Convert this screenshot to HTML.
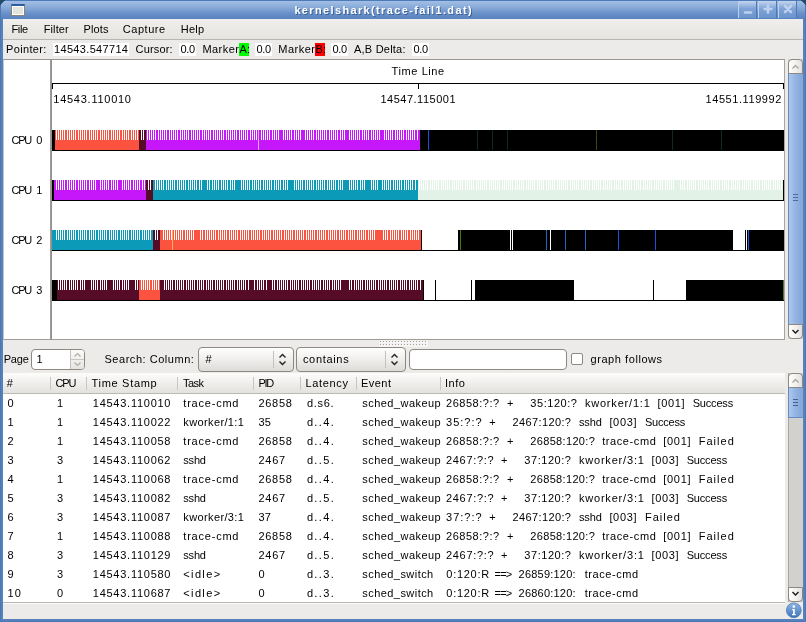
<!DOCTYPE html>
<html><head><meta charset="utf-8"><title>kernelshark</title>
<style>
html,body{margin:0;padding:0;}
body{width:806px;height:622px;position:relative;overflow:hidden;background:#edebe9;font:11px "Liberation Sans",sans-serif;color:#000;}
.a{position:absolute;}
.t{position:absolute;white-space:pre;line-height:16px;font-family:"Liberation Sans",sans-serif;}
.sb{background:linear-gradient(90deg,#ffffff,#f3f2f0 50%,#e2e0dd) !important;}
.btn{position:absolute;border:1px solid #8d8880;border-radius:3px;background:linear-gradient(#ffffff,#ecebe9 60%,#dddbd8);box-sizing:border-box;}
</style></head><body>
<!-- window frame -->
<div class="a" style="left:0;top:0;width:806px;height:622px;background:#5681bd;"></div>
<div class="a" style="left:0;top:0;width:806px;height:19px;background:linear-gradient(#4d7ab8 0,#4d7ab8 1px,#a3bfe4 1px,#86a8d8 8px,#6a92ca 13px,#5882bf 19px);"></div>
<svg class="a" style="left:0;top:0" width="806" height="6" viewBox="0 0 806 6" shape-rendering="crispEdges"><g fill="#214a66"><rect x="0" y="0" width="5" height="1"/><rect x="0" y="1" width="3" height="1"/><rect x="0" y="2" width="2" height="1"/><rect x="0" y="3" width="1" height="2"/><rect x="801" y="0" width="5" height="1"/><rect x="803" y="1" width="3" height="1"/><rect x="804" y="2" width="2" height="1"/><rect x="805" y="3" width="1" height="2"/></g><g fill="#3d6590"><rect x="3" y="1" width="1" height="1"/><rect x="2" y="2" width="1" height="1"/><rect x="1" y="3" width="1" height="1"/><rect x="802" y="1" width="1" height="1"/><rect x="803" y="2" width="1" height="1"/><rect x="804" y="3" width="1" height="1"/></g></svg>
<!-- window icon -->
<div class="a" style="left:11px;top:4px;width:14px;height:12px;background:#fff;box-sizing:border-box;border:1px solid #8b8474;border-top:2px solid #2d5ca2;"></div>
<div class="a" style="left:13px;top:7px;width:10px;height:7px;background:#e2e4de;"></div>
<!-- title buttons -->
<div class="a" style="left:738px;top:1px;width:19px;height:17px;background:linear-gradient(#c3d5ee,#7ea3d6 45%,#6b94cd);border-left:1px solid #bcd0ec;border-right:1px solid #4f78b4;box-sizing:border-box;"></div>
<div class="a" style="left:758px;top:1px;width:19px;height:17px;background:linear-gradient(#c3d5ee,#7ea3d6 45%,#6b94cd);border-left:1px solid #bcd0ec;border-right:1px solid #4f78b4;box-sizing:border-box;"></div>
<div class="a" style="left:778px;top:1px;width:19px;height:17px;background:linear-gradient(#c3d5ee,#7ea3d6 45%,#6b94cd);border-left:1px solid #bcd0ec;border-right:1px solid #4f78b4;box-sizing:border-box;"></div>
<svg class="a" style="left:738px;top:1px" width="60" height="17" viewBox="0 0 60 17">
 <g fill="none" stroke="#bdd0ed" stroke-width="2.6" stroke-linecap="round">
  <path d="M7 11.5h6"/>
  <path d="M30 4.5v7M26.5 8h7"/>
  <path d="M47 5l6 6M53 5l-6 6"/>
 </g>
</svg>
<div class="a" style="left:0;top:5px;width:1px;height:617px;background:#4c78b5;"></div>
<div class="a" style="left:805px;top:5px;width:1px;height:617px;background:#4c78b5;"></div>
<div class="a" style="left:0;top:621px;width:806px;height:1px;background:#4c78b5;"></div>
<!-- client area -->
<div class="a" style="left:3px;top:19px;width:800px;height:600px;background:#edebe9;"></div>
<!-- menubar -->
<div class="a" style="left:3px;top:19px;width:800px;height:20px;background:linear-gradient(#efeeec,#e6e4e1);"></div>
<div class="a" style="left:3px;top:39px;width:800px;height:1px;background:#b9b5af;"></div>
<!-- info bar boxes -->
<div class="a" style="left:53px;top:43px;width:76px;height:13px;background:#fff;"></div>
<div class="a" style="left:179px;top:43px;width:17px;height:13px;background:#fff;"></div>
<div class="a" style="left:239px;top:43px;width:10px;height:13px;background:#00ff00;"></div>
<div class="a" style="left:255px;top:43px;width:17px;height:13px;background:#fff;"></div>
<div class="a" style="left:315px;top:43px;width:10px;height:13px;background:#ff0000;"></div>
<div class="a" style="left:331px;top:43px;width:17px;height:13px;background:#fff;"></div>
<div class="a" style="left:412px;top:43px;width:17px;height:13px;background:#fff;"></div>
<!-- graph area -->
<div class="a" style="left:3px;top:59px;width:782px;height:281px;background:#fff;border-top:1px solid #9c968e;border-left:1px solid #c9c5c0;border-right:1px solid #a8a39d;border-bottom:1px solid #a09b95;box-sizing:border-box;"></div>
<div class="a" style="left:50px;top:60px;width:2px;height:280px;background:linear-gradient(90deg,#a5a09b,#8f8b86);"></div>
<!-- graph scrollbar -->
<div class="a" style="left:788px;top:59px;width:15px;height:280px;background:#d3d1ce;"></div>
<div class="a" style="left:788px;top:73px;width:15px;height:252px;box-sizing:border-box;border:1px solid #6389c0;border-right-color:#86a8da;background:linear-gradient(90deg,#adc8ed,#96b6e3 45%,#84a7d9);"></div>
<div class="btn sb" style="left:788px;top:59px;width:15px;height:15px;border-radius:4px 4px 0 0;"></div>
<div class="btn sb" style="left:788px;top:324px;width:15px;height:15px;border-radius:0 0 4px 4px;"></div>
<svg class="a" style="left:788px;top:59px" width="15" height="280" viewBox="0 0 15 280" fill="none">
 <path d="M4.5 9.5l3-3 3 3" stroke="#a9a6a2" stroke-width="1.4"/>
 <path d="M4.5 271l3 3 3-3" stroke="#1a1a1a" stroke-width="1.4"/>
 <path d="M5 135.5h5M5 138.5h5M5 141.5h5" stroke="#4d6c9e" stroke-width="1"/>
</svg>
<!-- pane handle -->
<svg class="a" style="left:379px;top:340px" width="49" height="7" viewBox="0 0 49 7" shape-rendering="crispEdges"><rect width="49" height="7" fill="#f3f2f0"/><rect x="1" y="1" width="1" height="1" fill="#a39f9a"/><rect x="2" y="2" width="1" height="1" fill="#fff"/><rect x="4" y="1" width="1" height="1" fill="#a39f9a"/><rect x="5" y="2" width="1" height="1" fill="#fff"/><rect x="7" y="1" width="1" height="1" fill="#a39f9a"/><rect x="8" y="2" width="1" height="1" fill="#fff"/><rect x="10" y="1" width="1" height="1" fill="#a39f9a"/><rect x="11" y="2" width="1" height="1" fill="#fff"/><rect x="13" y="1" width="1" height="1" fill="#a39f9a"/><rect x="14" y="2" width="1" height="1" fill="#fff"/><rect x="16" y="1" width="1" height="1" fill="#a39f9a"/><rect x="17" y="2" width="1" height="1" fill="#fff"/><rect x="19" y="1" width="1" height="1" fill="#a39f9a"/><rect x="20" y="2" width="1" height="1" fill="#fff"/><rect x="22" y="1" width="1" height="1" fill="#a39f9a"/><rect x="23" y="2" width="1" height="1" fill="#fff"/><rect x="25" y="1" width="1" height="1" fill="#a39f9a"/><rect x="26" y="2" width="1" height="1" fill="#fff"/><rect x="28" y="1" width="1" height="1" fill="#a39f9a"/><rect x="29" y="2" width="1" height="1" fill="#fff"/><rect x="31" y="1" width="1" height="1" fill="#a39f9a"/><rect x="32" y="2" width="1" height="1" fill="#fff"/><rect x="34" y="1" width="1" height="1" fill="#a39f9a"/><rect x="35" y="2" width="1" height="1" fill="#fff"/><rect x="37" y="1" width="1" height="1" fill="#a39f9a"/><rect x="38" y="2" width="1" height="1" fill="#fff"/><rect x="40" y="1" width="1" height="1" fill="#a39f9a"/><rect x="41" y="2" width="1" height="1" fill="#fff"/><rect x="43" y="1" width="1" height="1" fill="#a39f9a"/><rect x="44" y="2" width="1" height="1" fill="#fff"/><rect x="46" y="1" width="1" height="1" fill="#a39f9a"/><rect x="47" y="2" width="1" height="1" fill="#fff"/><rect x="1" y="4" width="1" height="1" fill="#a39f9a"/><rect x="2" y="5" width="1" height="1" fill="#fff"/><rect x="4" y="4" width="1" height="1" fill="#a39f9a"/><rect x="5" y="5" width="1" height="1" fill="#fff"/><rect x="7" y="4" width="1" height="1" fill="#a39f9a"/><rect x="8" y="5" width="1" height="1" fill="#fff"/><rect x="10" y="4" width="1" height="1" fill="#a39f9a"/><rect x="11" y="5" width="1" height="1" fill="#fff"/><rect x="13" y="4" width="1" height="1" fill="#a39f9a"/><rect x="14" y="5" width="1" height="1" fill="#fff"/><rect x="16" y="4" width="1" height="1" fill="#a39f9a"/><rect x="17" y="5" width="1" height="1" fill="#fff"/><rect x="19" y="4" width="1" height="1" fill="#a39f9a"/><rect x="20" y="5" width="1" height="1" fill="#fff"/><rect x="22" y="4" width="1" height="1" fill="#a39f9a"/><rect x="23" y="5" width="1" height="1" fill="#fff"/><rect x="25" y="4" width="1" height="1" fill="#a39f9a"/><rect x="26" y="5" width="1" height="1" fill="#fff"/><rect x="28" y="4" width="1" height="1" fill="#a39f9a"/><rect x="29" y="5" width="1" height="1" fill="#fff"/><rect x="31" y="4" width="1" height="1" fill="#a39f9a"/><rect x="32" y="5" width="1" height="1" fill="#fff"/><rect x="34" y="4" width="1" height="1" fill="#a39f9a"/><rect x="35" y="5" width="1" height="1" fill="#fff"/><rect x="37" y="4" width="1" height="1" fill="#a39f9a"/><rect x="38" y="5" width="1" height="1" fill="#fff"/><rect x="40" y="4" width="1" height="1" fill="#a39f9a"/><rect x="41" y="5" width="1" height="1" fill="#fff"/><rect x="43" y="4" width="1" height="1" fill="#a39f9a"/><rect x="44" y="5" width="1" height="1" fill="#fff"/><rect x="46" y="4" width="1" height="1" fill="#a39f9a"/><rect x="47" y="5" width="1" height="1" fill="#fff"/></svg>
<!-- search bar widgets -->
<div class="a" style="left:31px;top:349px;width:54px;height:21px;box-sizing:border-box;border:1px solid #8d8880;border-radius:4px;background:#fff;"></div>
<div class="a" style="left:70px;top:350px;width:14px;height:19px;box-sizing:border-box;border-left:1px solid #c4c0ba;background:linear-gradient(#fbfbfa,#e7e5e2);border-radius:0 3px 3px 0;"></div>
<div class="a" style="left:71px;top:359px;width:13px;height:1px;background:#c9c6c1;"></div>
<svg class="a" style="left:70px;top:350px" width="15" height="19" viewBox="0 0 15 19" fill="none" stroke="#b0ada8" stroke-width="1.2"><path d="M4.5 6.5l3-3 3 3M4.5 12.5l3 3 3-3"/></svg>
<div class="btn" style="left:198px;top:347px;width:96px;height:25px;border-radius:4px;"></div>
<div class="a" style="left:273px;top:351px;width:1px;height:17px;background:#c4c0ba;"></div>
<div class="btn" style="left:296px;top:347px;width:110px;height:25px;border-radius:4px;"></div>
<div class="a" style="left:385px;top:351px;width:1px;height:17px;background:#c4c0ba;"></div>
<svg class="a" style="left:276px;top:352px" width="130" height="15" viewBox="0 0 130 15" fill="none" stroke="#222" stroke-width="1.4"><path d="M3.5 5.5l3-3 3 3M3.5 9.5l3 3 3-3"/><path d="M115.5 5.5l3-3 3 3M115.5 9.5l3 3 3-3"/></svg>
<div class="a" style="left:409px;top:349px;width:158px;height:21px;box-sizing:border-box;border:1px solid #8d8880;border-radius:4px;background:#fff;"></div>
<div class="a" style="left:571px;top:353px;width:12px;height:12px;box-sizing:border-box;border:1px solid #8d8880;border-radius:2px;background:#fff;"></div>
<!-- list -->
<div class="a" style="left:3px;top:373px;width:782px;height:229px;background:#fff;"></div>
<div class="a" style="left:3px;top:373px;width:782px;height:21px;background:linear-gradient(#fdfdfc,#f1f0ee 45%,#e4e2df);border-bottom:1px solid #bcb8b2;box-sizing:border-box;"></div>
<div class="a" style="left:50px;top:377px;width:1px;height:13px;background:#c9c6c1;"></div>
<div class="a" style="left:86px;top:377px;width:1px;height:13px;background:#c9c6c1;"></div>
<div class="a" style="left:177px;top:377px;width:1px;height:13px;background:#c9c6c1;"></div>
<div class="a" style="left:253px;top:377px;width:1px;height:13px;background:#c9c6c1;"></div>
<div class="a" style="left:300px;top:377px;width:1px;height:13px;background:#c9c6c1;"></div>
<div class="a" style="left:356px;top:377px;width:1px;height:13px;background:#c9c6c1;"></div>
<div class="a" style="left:440px;top:377px;width:1px;height:13px;background:#c9c6c1;"></div>
<div class="a" style="left:3px;top:602px;width:782px;height:1px;background:#b9b6b1;"></div>
<div class="a" style="left:3px;top:603px;width:782px;height:1px;background:#fbfaf9;"></div>
<!-- list scrollbar -->
<div class="a" style="left:788px;top:373px;width:15px;height:229px;background:#d3d1ce;border-left:1px solid #a9a6a1;box-sizing:border-box;"></div>
<div class="a" style="left:788px;top:387px;width:15px;height:31px;box-sizing:border-box;border:1px solid #6389c0;border-right-color:#86a8da;background:linear-gradient(90deg,#adc8ed,#96b6e3 45%,#84a7d9);"></div>
<div class="btn sb" style="left:788px;top:373px;width:15px;height:15px;border-radius:4px 4px 0 0;"></div>
<div class="btn sb" style="left:788px;top:587px;width:15px;height:15px;border-radius:0 0 4px 4px;"></div>
<svg class="a" style="left:788px;top:373px" width="15" height="229" viewBox="0 0 15 229" fill="none">
 <path d="M4.5 9.5l3-3 3 3" stroke="#a9a6a2" stroke-width="1.4"/>
 <path d="M4.5 219l3 3 3-3" stroke="#1a1a1a" stroke-width="1.4"/>
 <path d="M5 26.5h5M5 29.5h5M5 32.5h5" stroke="#44608c" stroke-width="1"/>
</svg>
<!-- info icon -->
<svg class="a" style="left:785px;top:602px" width="18" height="17" viewBox="0 0 18 17">
 <defs><linearGradient id="ig" x1="0" y1="0" x2="0" y2="1"><stop offset="0" stop-color="#8fb6e6"/><stop offset="1" stop-color="#3d73b8"/></linearGradient></defs>
 <circle cx="8.8" cy="8.3" r="7.4" fill="url(#ig)" stroke="#4a79b6" stroke-width="0.8"/>
 <circle cx="8.8" cy="4.6" r="1.3" fill="#fff"/>
 <path d="M7.2 7h2.6v5h1v1.2H7V12h1.1V8.2H7.2z" fill="#fff"/>
</svg>
<svg width="806" height="622" viewBox="0 0 806 622" shape-rendering="crispEdges" style="position:absolute;left:0;top:0"><rect x="52" y="130" width="3" height="20" fill="#000"/><rect x="55" y="130" width="84" height="20" fill="#fb5340"/><rect x="139" y="130" width="7" height="20" fill="#560b26"/><rect x="146" y="130" width="274" height="20" fill="#c617fb"/><rect x="420" y="130" width="364" height="20" fill="#000"/><path d="M56.5 130v10M58.5 130v10M60.5 130v10M62.5 130v10M64.5 130v10M67.5 130v10M69.5 130v10M71.5 130v10M73.5 130v10M75.5 130v10M78.5 130v10M80.5 130v10M82.5 130v10M84.5 130v10M86.5 130v10M89.5 130v10M91.5 130v10M93.5 130v10M95.5 130v10M97.5 130v10M100.5 130v10M102.5 130v10M104.5 130v10M106.5 130v10M108.5 130v10M111.5 130v10M113.5 130v10M115.5 130v10M117.5 130v10M119.5 130v10M122.5 130v10M124.5 130v10M126.5 130v10M128.5 130v10M131.5 130v10M133.5 130v10M135.5 130v10M137.5 130v10" stroke="#fff" stroke-width="1" fill="none"/><path d="M141.5 130v10M143.5 130v10" stroke="#fff" stroke-width="1" fill="none"/><path d="M147.5 130v10M149.5 130v10M151.5 130v10M153.5 130v10M155.5 130v10M158.5 130v10M160.5 130v10M162.5 130v10M164.5 130v10M166.5 130v10M169.5 130v10M171.5 130v10M173.5 130v10M175.5 130v10M177.5 130v10M180.5 130v10M182.5 130v10M184.5 130v10M186.5 130v10M188.5 130v10M191.5 130v10M193.5 130v10M195.5 130v10M197.5 130v10M199.5 130v10M202.5 130v10M204.5 130v10M206.5 130v10M208.5 130v10M210.5 130v10M213.5 130v10M215.5 130v10M217.5 130v10M219.5 130v10M221.5 130v10M223.5 130v10M226.5 130v10M228.5 130v10M230.5 130v10M232.5 130v10M234.5 130v10M236.5 130v10M239.5 130v10M241.5 130v10M243.5 130v10M245.5 130v10M247.5 130v10M250.5 130v10M252.5 130v10M254.5 130v10M256.5 130v10M258.5 130v10M261.5 130v10M263.5 130v10M265.5 130v10M267.5 130v10M269.5 130v10M272.5 130v10M274.5 130v10M276.5 130v10M278.5 130v10M283.5 130v10M285.5 130v10M287.5 130v10M289.5 130v10M291.5 130v10M294.5 130v10M296.5 130v10M298.5 130v10M300.5 130v10M305.5 130v10M307.5 130v10M309.5 130v10M311.5 130v10M313.5 130v10M316.5 130v10M318.5 130v10M320.5 130v10M322.5 130v10M324.5 130v10M326.5 130v10M329.5 130v10M331.5 130v10M333.5 130v10M335.5 130v10M337.5 130v10M340.5 130v10M342.5 130v10M344.5 130v10M349.5 130v10M351.5 130v10M353.5 130v10M355.5 130v10M357.5 130v10M359.5 130v10M362.5 130v10M364.5 130v10M366.5 130v10M368.5 130v10M371.5 130v10M373.5 130v10M375.5 130v10M377.5 130v10M379.5 130v10M384.5 130v10M386.5 130v10M388.5 130v10M390.5 130v10M392.5 130v10M395.5 130v10M397.5 130v10M399.5 130v10M401.5 130v10M403.5 130v10M406.5 130v10M408.5 130v10M410.5 130v10M412.5 130v10M414.5 130v10M417.5 130v10" stroke="#fff" stroke-width="1" fill="none"/><rect x="258" y="130" width="1" height="20" fill="#e9a4fd"/><rect x="428" y="130" width="1" height="20" fill="#1f4fe0"/><rect x="477" y="130" width="1" height="20" fill="#0c2a2a"/><rect x="492" y="130" width="1" height="20" fill="#0c2a2a"/><rect x="507" y="130" width="1" height="20" fill="#0c2a2a"/><rect x="596" y="130" width="1" height="20" fill="#3a4a10"/><rect x="672" y="130" width="1" height="20" fill="#0c2a2a"/><rect x="721" y="130" width="1" height="20" fill="#0c2a2a"/><rect x="52" y="150" width="732" height="1" fill="#000"/><rect x="52" y="180" width="2" height="20" fill="#000"/><rect x="54" y="180" width="92" height="20" fill="#c617fb"/><rect x="146" y="180" width="7" height="20" fill="#560b26"/><rect x="153" y="180" width="265" height="20" fill="#0b9bb8"/><rect x="418" y="180" width="365" height="20" fill="#e3f2e7"/><rect x="783" y="180" width="1" height="20" fill="#000"/><path d="M56.5 180v10M58.5 180v10M60.5 180v10M62.5 180v10M64.5 180v10M67.5 180v10M69.5 180v10M71.5 180v10M73.5 180v10M75.5 180v10M78.5 180v10M80.5 180v10M82.5 180v10M84.5 180v10M86.5 180v10M89.5 180v10M91.5 180v10M93.5 180v10M95.5 180v10M100.5 180v10M102.5 180v10M104.5 180v10M106.5 180v10M108.5 180v10M111.5 180v10M113.5 180v10M115.5 180v10M117.5 180v10M122.5 180v10M124.5 180v10M126.5 180v10M128.5 180v10M130.5 180v10M133.5 180v10M135.5 180v10M137.5 180v10M139.5 180v10M142.5 180v10M144.5 180v10" stroke="#fff" stroke-width="1" fill="none"/><path d="M148.5 180v10M150.5 180v10" stroke="#fff" stroke-width="1" fill="none"/><path d="M155.5 180v10M157.5 180v10M159.5 180v10M161.5 180v10M163.5 180v10M166.5 180v10M168.5 180v10M170.5 180v10M172.5 180v10M174.5 180v10M177.5 180v10M179.5 180v10M181.5 180v10M183.5 180v10M185.5 180v10M188.5 180v10M190.5 180v10M192.5 180v10M194.5 180v10M196.5 180v10M199.5 180v10M201.5 180v10M207.5 180v10M209.5 180v10M212.5 180v10M214.5 180v10M216.5 180v10M218.5 180v10M221.5 180v10M223.5 180v10M225.5 180v10M227.5 180v10M230.5 180v10M232.5 180v10M234.5 180v10M241.5 180v10M243.5 180v10M245.5 180v10M247.5 180v10M249.5 180v10M252.5 180v10M254.5 180v10M256.5 180v10M258.5 180v10M260.5 180v10M263.5 180v10M265.5 180v10M267.5 180v10M269.5 180v10M271.5 180v10M274.5 180v10M276.5 180v10M278.5 180v10M280.5 180v10M283.5 180v10M285.5 180v10M287.5 180v10M294.5 180v10M296.5 180v10M298.5 180v10M300.5 180v10M302.5 180v10M305.5 180v10M307.5 180v10M309.5 180v10M311.5 180v10M313.5 180v10M316.5 180v10M318.5 180v10M320.5 180v10M322.5 180v10M324.5 180v10M327.5 180v10M329.5 180v10M331.5 180v10M333.5 180v10M335.5 180v10M338.5 180v10M340.5 180v10M342.5 180v10M349.5 180v10M351.5 180v10M353.5 180v10M355.5 180v10M357.5 180v10M360.5 180v10M362.5 180v10M364.5 180v10M371.5 180v10M373.5 180v10M375.5 180v10M377.5 180v10M382.5 180v10M384.5 180v10M386.5 180v10M388.5 180v10M390.5 180v10M393.5 180v10M395.5 180v10M397.5 180v10M399.5 180v10M401.5 180v10M404.5 180v10M406.5 180v10M408.5 180v10M410.5 180v10M412.5 180v10M415.5 180v10" stroke="#fff" stroke-width="1" fill="none"/><path d="M419.5 180v10M421.5 180v10M423.5 180v10M425.5 180v10M427.5 180v10M430.5 180v10M432.5 180v10M434.5 180v10M436.5 180v10M438.5 180v10M441.5 180v10M443.5 180v10M445.5 180v10M447.5 180v10M449.5 180v10M452.5 180v10M454.5 180v10M456.5 180v10M458.5 180v10M460.5 180v10M462.5 180v10M465.5 180v10M467.5 180v10M469.5 180v10M471.5 180v10M473.5 180v10M476.5 180v10M478.5 180v10M480.5 180v10M482.5 180v10M484.5 180v10M486.5 180v10M489.5 180v10M491.5 180v10M493.5 180v10M495.5 180v10M497.5 180v10M499.5 180v10M502.5 180v10M504.5 180v10M506.5 180v10M508.5 180v10M510.5 180v10M512.5 180v10M515.5 180v10M517.5 180v10M519.5 180v10M521.5 180v10M523.5 180v10M526.5 180v10M528.5 180v10M530.5 180v10M532.5 180v10M534.5 180v10M537.5 180v10M539.5 180v10M541.5 180v10M543.5 180v10M546.5 180v10M548.5 180v10M550.5 180v10M552.5 180v10M554.5 180v10M557.5 180v10M559.5 180v10M561.5 180v10M563.5 180v10M565.5 180v10M567.5 180v10M570.5 180v10M572.5 180v10M574.5 180v10M576.5 180v10M578.5 180v10M581.5 180v10M583.5 180v10M585.5 180v10M587.5 180v10M589.5 180v10M592.5 180v10M594.5 180v10M596.5 180v10M598.5 180v10M600.5 180v10M603.5 180v10M605.5 180v10M607.5 180v10M609.5 180v10M611.5 180v10M614.5 180v10M616.5 180v10M618.5 180v10M620.5 180v10M623.5 180v10M625.5 180v10M627.5 180v10M629.5 180v10M631.5 180v10M634.5 180v10M636.5 180v10M638.5 180v10M640.5 180v10M643.5 180v10M645.5 180v10M647.5 180v10M649.5 180v10M651.5 180v10M654.5 180v10M656.5 180v10M658.5 180v10M660.5 180v10M662.5 180v10M665.5 180v10M667.5 180v10M669.5 180v10M671.5 180v10M673.5 180v10M680.5 180v10M682.5 180v10M684.5 180v10M687.5 180v10M689.5 180v10M691.5 180v10M693.5 180v10M695.5 180v10M698.5 180v10M700.5 180v10M702.5 180v10M704.5 180v10M706.5 180v10M708.5 180v10M711.5 180v10M713.5 180v10M715.5 180v10M717.5 180v10M719.5 180v10M722.5 180v10M724.5 180v10M726.5 180v10M728.5 180v10M731.5 180v10M733.5 180v10M735.5 180v10M737.5 180v10M739.5 180v10M742.5 180v10M744.5 180v10M746.5 180v10M748.5 180v10M750.5 180v10M753.5 180v10M755.5 180v10M757.5 180v10M759.5 180v10M762.5 180v10M764.5 180v10M766.5 180v10M768.5 180v10M770.5 180v10M773.5 180v10M775.5 180v10M777.5 180v10M779.5 180v10M781.5 180v10" stroke="#fff" stroke-width="1" fill="none"/><rect x="52" y="200" width="732" height="1" fill="#000"/><rect x="52" y="230" width="101" height="20" fill="#0b9bb8"/><rect x="153" y="230" width="7" height="20" fill="#560b26"/><rect x="160" y="230" width="261" height="20" fill="#fb5340"/><rect x="421" y="230" width="1" height="20" fill="#000"/><path d="M56.5 230v10M58.5 230v10M60.5 230v10M62.5 230v10M64.5 230v10M67.5 230v10M69.5 230v10M71.5 230v10M73.5 230v10M75.5 230v10M78.5 230v10M80.5 230v10M82.5 230v10M84.5 230v10M86.5 230v10M89.5 230v10M91.5 230v10M93.5 230v10M95.5 230v10M98.5 230v10M100.5 230v10M102.5 230v10M104.5 230v10M106.5 230v10M109.5 230v10M111.5 230v10M113.5 230v10M115.5 230v10M117.5 230v10M120.5 230v10M122.5 230v10M124.5 230v10M126.5 230v10M128.5 230v10M131.5 230v10M133.5 230v10M135.5 230v10M137.5 230v10M139.5 230v10M142.5 230v10M144.5 230v10M146.5 230v10M148.5 230v10M150.5 230v10" stroke="#fff" stroke-width="1" fill="none"/><path d="M155.5 230v10M157.5 230v10" stroke="#fff" stroke-width="1" fill="none"/><path d="M163.5 230v10M165.5 230v10M167.5 230v10M169.5 230v10M171.5 230v10M174.5 230v10M176.5 230v10M178.5 230v10M180.5 230v10M182.5 230v10M185.5 230v10M187.5 230v10M189.5 230v10M191.5 230v10M193.5 230v10M200.5 230v10M202.5 230v10M205.5 230v10M207.5 230v10M209.5 230v10M211.5 230v10M213.5 230v10M215.5 230v10M218.5 230v10M220.5 230v10M222.5 230v10M224.5 230v10M226.5 230v10M229.5 230v10M231.5 230v10M233.5 230v10M235.5 230v10M237.5 230v10M240.5 230v10M242.5 230v10M244.5 230v10M246.5 230v10M248.5 230v10M251.5 230v10M253.5 230v10M255.5 230v10M257.5 230v10M259.5 230v10M262.5 230v10M264.5 230v10M266.5 230v10M268.5 230v10M270.5 230v10M273.5 230v10M275.5 230v10M277.5 230v10M279.5 230v10M281.5 230v10M284.5 230v10M286.5 230v10M288.5 230v10M290.5 230v10M292.5 230v10M295.5 230v10M297.5 230v10M299.5 230v10M301.5 230v10M303.5 230v10M306.5 230v10M308.5 230v10M310.5 230v10M312.5 230v10M314.5 230v10M317.5 230v10M319.5 230v10M321.5 230v10M323.5 230v10M325.5 230v10M328.5 230v10M330.5 230v10M332.5 230v10M334.5 230v10M336.5 230v10M339.5 230v10M341.5 230v10M343.5 230v10M345.5 230v10M348.5 230v10M350.5 230v10M352.5 230v10M354.5 230v10M357.5 230v10M359.5 230v10M361.5 230v10M363.5 230v10M365.5 230v10M368.5 230v10M370.5 230v10M372.5 230v10M374.5 230v10M383.5 230v10M385.5 230v10M387.5 230v10M390.5 230v10M392.5 230v10M394.5 230v10M396.5 230v10M398.5 230v10M401.5 230v10M403.5 230v10M405.5 230v10M407.5 230v10M410.5 230v10M412.5 230v10M414.5 230v10M416.5 230v10M418.5 230v10" stroke="#fff" stroke-width="1" fill="none"/><rect x="172" y="230" width="1" height="20" fill="#fdb060"/><rect x="458" y="230" width="275" height="20" fill="#000"/><rect x="460" y="230" width="1" height="20" fill="#3f7a10"/><rect x="510" y="230" width="1" height="20" fill="#fff"/><rect x="512" y="230" width="1" height="20" fill="#fff"/><rect x="546" y="230" width="1" height="20" fill="#2a62c8"/><rect x="550" y="230" width="1" height="20" fill="#fff"/><rect x="565" y="230" width="1" height="20" fill="#2a62c8"/><rect x="585" y="230" width="1" height="20" fill="#2a62c8"/><rect x="618" y="230" width="1" height="20" fill="#1f4fe0"/><rect x="655" y="230" width="1" height="20" fill="#1f4fe0"/><rect x="745" y="230" width="39" height="20" fill="#000"/><rect x="746" y="230" width="1" height="20" fill="#fff"/><rect x="748" y="230" width="1" height="20" fill="#2a55e0"/><rect x="52" y="250" width="732" height="1" fill="#000"/><rect x="52" y="280" width="5" height="20" fill="#000"/><rect x="57" y="280" width="82" height="20" fill="#560b26"/><rect x="139" y="280" width="21" height="20" fill="#fb5340"/><rect x="160" y="280" width="263" height="20" fill="#560b26"/><path d="M58.5 280v10M60.5 280v10M62.5 280v10M64.5 280v10M66.5 280v10M69.5 280v10M71.5 280v10M73.5 280v10M75.5 280v10M77.5 280v10M80.5 280v10M82.5 280v10M84.5 280v10M91.5 280v10M93.5 280v10M95.5 280v10M97.5 280v10M100.5 280v10M102.5 280v10M104.5 280v10M106.5 280v10M113.5 280v10M115.5 280v10M117.5 280v10M119.5 280v10M122.5 280v10M124.5 280v10M126.5 280v10M128.5 280v10M135.5 280v10M137.5 280v10" stroke="#fff" stroke-width="1" fill="none"/><path d="M141.5 280v10M143.5 280v10M145.5 280v10M147.5 280v10M149.5 280v10M152.5 280v10M154.5 280v10M156.5 280v10M158.5 280v10" stroke="#fff" stroke-width="1" fill="none"/><path d="M164.5 280v10M166.5 280v10M168.5 280v10M170.5 280v10M172.5 280v10M175.5 280v10M177.5 280v10M179.5 280v10M181.5 280v10M183.5 280v10M186.5 280v10M188.5 280v10M190.5 280v10M192.5 280v10M194.5 280v10M197.5 280v10M199.5 280v10M201.5 280v10M203.5 280v10M206.5 280v10M208.5 280v10M210.5 280v10M212.5 280v10M215.5 280v10M217.5 280v10M219.5 280v10M221.5 280v10M223.5 280v10M226.5 280v10M228.5 280v10M230.5 280v10M232.5 280v10M234.5 280v10M237.5 280v10M239.5 280v10M241.5 280v10M243.5 280v10M245.5 280v10M248.5 280v10M254.5 280v10M257.5 280v10M259.5 280v10M261.5 280v10M263.5 280v10M266.5 280v10M272.5 280v10M274.5 280v10M277.5 280v10M279.5 280v10M281.5 280v10M283.5 280v10M285.5 280v10M287.5 280v10M290.5 280v10M292.5 280v10M294.5 280v10M296.5 280v10M298.5 280v10M301.5 280v10M303.5 280v10M305.5 280v10M307.5 280v10M309.5 280v10M312.5 280v10M314.5 280v10M316.5 280v10M318.5 280v10M320.5 280v10M323.5 280v10M325.5 280v10M327.5 280v10M329.5 280v10M332.5 280v10M334.5 280v10M336.5 280v10M338.5 280v10M340.5 280v10M349.5 280v10M351.5 280v10M354.5 280v10M356.5 280v10M358.5 280v10M360.5 280v10M362.5 280v10M365.5 280v10M367.5 280v10M369.5 280v10M371.5 280v10M373.5 280v10M375.5 280v10M378.5 280v10M380.5 280v10M382.5 280v10M384.5 280v10M386.5 280v10M389.5 280v10M391.5 280v10M393.5 280v10M395.5 280v10M397.5 280v10M400.5 280v10M402.5 280v10M404.5 280v10M406.5 280v10M409.5 280v10M411.5 280v10M413.5 280v10M415.5 280v10M417.5 280v10M420.5 280v10" stroke="#fff" stroke-width="1" fill="none"/><rect x="423" y="280" width="1" height="20" fill="#000"/><rect x="435" y="280" width="1" height="20" fill="#000"/><rect x="471" y="280" width="1" height="20" fill="#000"/><rect x="653" y="280" width="1" height="20" fill="#000"/><rect x="475" y="280" width="99" height="20" fill="#000"/><rect x="686" y="280" width="97" height="20" fill="#000"/><rect x="783" y="280" width="1" height="20" fill="#4a7a20"/><rect x="52" y="300" width="732" height="1" fill="#000"/><rect x="52" y="83" width="732" height="1" fill="#000"/><rect x="52" y="83" width="1" height="6" fill="#000"/><rect x="418" y="83" width="1" height="6" fill="#000"/><rect x="783" y="83" width="1" height="6" fill="#000"/></svg>
<div id="txt" style="position:absolute;left:0;top:0;width:806px;height:622px;will-change:transform;">
<span class="t" style="left:294.40px;top:1.69px;letter-spacing:1.355px;font-weight:bold;color:#fff;text-shadow:1px 1px 0 #3a5f96">kernelshark(trace-fail1.dat)</span>
<span class="t" style="left:11.50px;top:21.19px;letter-spacing:-0.378px">File</span>
<span class="t" style="left:43.70px;top:21.19px;letter-spacing:0.129px">Filter</span>
<span class="t" style="left:83.50px;top:21.19px;letter-spacing:0.108px">Plots</span>
<span class="t" style="left:122.80px;top:21.19px;letter-spacing:0.527px">Capture</span>
<span class="t" style="left:180.70px;top:21.19px;letter-spacing:0.258px">Help</span>
<span class="t" style="left:6.00px;top:41.19px;letter-spacing:0.354px">Pointer:</span>
<span class="t" style="left:54.00px;top:41.19px;letter-spacing:0.331px">14543.547714</span>
<span class="t" style="left:135.60px;top:41.19px;letter-spacing:0.140px">Cursor:</span>
<span class="t" style="left:180.50px;top:41.19px;letter-spacing:-0.398px">0.0</span>
<span class="t" style="left:202.40px;top:41.19px;letter-spacing:0.473px">Marker</span>
<span class="t" style="left:239.60px;top:41.19px">A:</span>
<span class="t" style="left:256.50px;top:41.19px;letter-spacing:-0.398px">0.0</span>
<span class="t" style="left:278.30px;top:41.19px;letter-spacing:0.493px">Marker</span>
<span class="t" style="left:315.60px;top:41.19px">B:</span>
<span class="t" style="left:332.50px;top:41.19px;letter-spacing:-0.398px">0.0</span>
<span class="t" style="left:354.00px;top:41.19px;letter-spacing:0.219px">A,B Delta:</span>
<span class="t" style="left:413.50px;top:41.19px;letter-spacing:-0.398px">0.0</span>
<span class="t" style="left:391.60px;top:63.19px;letter-spacing:0.589px">Time Line</span>
<span class="t" style="left:53.30px;top:91.19px;letter-spacing:0.741px">14543.110010</span>
<span class="t" style="left:380.40px;top:91.19px;letter-spacing:0.514px">14547.115001</span>
<span class="t" style="left:705.60px;top:91.19px;letter-spacing:0.559px">14551.119992</span>
<span class="t" style="left:11.40px;top:132.19px;letter-spacing:-1.167px">CPU</span>
<span class="t" style="left:36.30px;top:132.19px">0</span>
<span class="t" style="left:11.40px;top:182.19px;letter-spacing:-1.167px">CPU</span>
<span class="t" style="left:36.30px;top:182.19px">1</span>
<span class="t" style="left:11.40px;top:232.19px;letter-spacing:-1.167px">CPU</span>
<span class="t" style="left:36.30px;top:232.19px">2</span>
<span class="t" style="left:11.40px;top:282.19px;letter-spacing:-1.167px">CPU</span>
<span class="t" style="left:36.30px;top:282.19px">3</span>
<span class="t" style="left:3.70px;top:351.19px;letter-spacing:-0.201px">Page</span>
<span class="t" style="left:36.50px;top:351.19px">1</span>
<span class="t" style="left:104.50px;top:351.19px;letter-spacing:0.533px">Search: Column:</span>
<span class="t" style="left:205.50px;top:351.19px">#</span>
<span class="t" style="left:302.90px;top:351.19px;letter-spacing:0.688px">contains</span>
<span class="t" style="left:590.50px;top:351.19px;letter-spacing:0.564px">graph follows</span>
<span class="t" style="left:6.70px;top:375.19px">#</span>
<span class="t" style="left:55.40px;top:375.19px;letter-spacing:-1.067px">CPU</span>
<span class="t" style="left:91.50px;top:375.19px;letter-spacing:0.701px">Time Stamp</span>
<span class="t" style="left:182.90px;top:375.19px;letter-spacing:-0.508px">Task</span>
<span class="t" style="left:258.60px;top:375.19px;letter-spacing:-1.322px">PID</span>
<span class="t" style="left:305.50px;top:375.19px;letter-spacing:0.661px">Latency</span>
<span class="t" style="left:361.00px;top:375.19px;letter-spacing:0.465px">Event</span>
<span class="t" style="left:445.00px;top:375.19px;letter-spacing:0.547px">Info</span>
<span class="t" style="left:7.40px;top:395.19px">0</span>
<span class="t" style="left:57.00px;top:395.19px">1</span>
<span class="t" style="left:92.80px;top:395.19px;letter-spacing:0.741px">14543.110010</span>
<span class="t" style="left:183.30px;top:395.19px;letter-spacing:0.787px">trace-cmd</span>
<span class="t" style="left:258.40px;top:395.19px;letter-spacing:0.727px">26858</span>
<span class="t" style="left:306.90px;top:395.19px;letter-spacing:0.735px">d.s6.</span>
<span class="t" style="left:362.30px;top:395.19px;letter-spacing:0.454px">sched_wakeup</span>
<span class="t" style="left:446.00px;top:395.19px;letter-spacing:0.520px">26858:?:?</span>
<span class="t" style="left:507.10px;top:395.19px">+</span>
<span class="t" style="left:530.30px;top:395.19px;letter-spacing:0.553px">35:120:?</span>
<span class="t" style="left:584.90px;top:395.19px;letter-spacing:0.804px">kworker/1:1</span>
<span class="t" style="left:657.40px;top:395.19px;letter-spacing:0.683px">[001]</span>
<span class="t" style="left:692.70px;top:395.19px;letter-spacing:-0.180px">Success</span>
<span class="t" style="left:7.40px;top:414.19px">1</span>
<span class="t" style="left:57.00px;top:414.19px">1</span>
<span class="t" style="left:92.80px;top:414.19px;letter-spacing:0.741px">14543.110022</span>
<span class="t" style="left:183.30px;top:414.19px;letter-spacing:0.374px">kworker/1:1</span>
<span class="t" style="left:258.40px;top:414.19px;letter-spacing:0.150px">35</span>
<span class="t" style="left:306.90px;top:414.19px;letter-spacing:1.348px">d..4.</span>
<span class="t" style="left:362.30px;top:414.19px;letter-spacing:0.454px">sched_wakeup</span>
<span class="t" style="left:446.00px;top:414.19px;letter-spacing:1.021px">35:?:?</span>
<span class="t" style="left:489.30px;top:414.19px">+</span>
<span class="t" style="left:512.40px;top:414.19px;letter-spacing:0.393px">2467:120:?</span>
<span class="t" style="left:578.90px;top:414.19px;letter-spacing:-0.117px">sshd</span>
<span class="t" style="left:609.40px;top:414.19px;letter-spacing:0.658px">[003]</span>
<span class="t" style="left:644.90px;top:414.19px;letter-spacing:-0.213px">Success</span>
<span class="t" style="left:7.40px;top:433.19px">2</span>
<span class="t" style="left:57.00px;top:433.19px">1</span>
<span class="t" style="left:92.80px;top:433.19px;letter-spacing:0.741px">14543.110058</span>
<span class="t" style="left:183.30px;top:433.19px;letter-spacing:0.787px">trace-cmd</span>
<span class="t" style="left:258.40px;top:433.19px;letter-spacing:0.727px">26858</span>
<span class="t" style="left:306.90px;top:433.19px;letter-spacing:1.348px">d..4.</span>
<span class="t" style="left:362.30px;top:433.19px;letter-spacing:0.454px">sched_wakeup</span>
<span class="t" style="left:446.00px;top:433.19px;letter-spacing:0.520px">26858:?:?</span>
<span class="t" style="left:507.10px;top:433.19px">+</span>
<span class="t" style="left:530.30px;top:433.19px;letter-spacing:0.333px">26858:120:?</span>
<span class="t" style="left:602.20px;top:433.19px;letter-spacing:0.587px">trace-cmd</span>
<span class="t" style="left:663.30px;top:433.19px;letter-spacing:0.683px">[001]</span>
<span class="t" style="left:698.70px;top:433.19px;letter-spacing:1.026px">Failed</span>
<span class="t" style="left:7.40px;top:452.19px">3</span>
<span class="t" style="left:57.00px;top:452.19px">3</span>
<span class="t" style="left:92.80px;top:452.19px;letter-spacing:0.741px">14543.110062</span>
<span class="t" style="left:183.30px;top:452.19px;letter-spacing:-0.183px">sshd</span>
<span class="t" style="left:258.40px;top:452.19px;letter-spacing:0.772px">2467</span>
<span class="t" style="left:306.90px;top:452.19px;letter-spacing:1.348px">d..5.</span>
<span class="t" style="left:362.30px;top:452.19px;letter-spacing:0.454px">sched_wakeup</span>
<span class="t" style="left:446.00px;top:452.19px;letter-spacing:0.682px">2467:?:?</span>
<span class="t" style="left:501.10px;top:452.19px">+</span>
<span class="t" style="left:524.30px;top:452.19px;letter-spacing:0.553px">37:120:?</span>
<span class="t" style="left:578.90px;top:452.19px;letter-spacing:0.814px">kworker/3:1</span>
<span class="t" style="left:651.40px;top:452.19px;letter-spacing:0.683px">[003]</span>
<span class="t" style="left:686.70px;top:452.19px;letter-spacing:-0.180px">Success</span>
<span class="t" style="left:7.40px;top:471.19px">4</span>
<span class="t" style="left:57.00px;top:471.19px">1</span>
<span class="t" style="left:92.80px;top:471.19px;letter-spacing:0.741px">14543.110068</span>
<span class="t" style="left:183.30px;top:471.19px;letter-spacing:0.787px">trace-cmd</span>
<span class="t" style="left:258.40px;top:471.19px;letter-spacing:0.727px">26858</span>
<span class="t" style="left:306.90px;top:471.19px;letter-spacing:1.348px">d..4.</span>
<span class="t" style="left:362.30px;top:471.19px;letter-spacing:0.454px">sched_wakeup</span>
<span class="t" style="left:446.00px;top:471.19px;letter-spacing:0.520px">26858:?:?</span>
<span class="t" style="left:507.10px;top:471.19px">+</span>
<span class="t" style="left:530.30px;top:471.19px;letter-spacing:0.333px">26858:120:?</span>
<span class="t" style="left:602.20px;top:471.19px;letter-spacing:0.587px">trace-cmd</span>
<span class="t" style="left:663.30px;top:471.19px;letter-spacing:0.683px">[001]</span>
<span class="t" style="left:698.70px;top:471.19px;letter-spacing:1.026px">Failed</span>
<span class="t" style="left:7.40px;top:490.19px">5</span>
<span class="t" style="left:57.00px;top:490.19px">3</span>
<span class="t" style="left:92.80px;top:490.19px;letter-spacing:0.741px">14543.110082</span>
<span class="t" style="left:183.30px;top:490.19px;letter-spacing:-0.183px">sshd</span>
<span class="t" style="left:258.40px;top:490.19px;letter-spacing:0.772px">2467</span>
<span class="t" style="left:306.90px;top:490.19px;letter-spacing:1.348px">d..5.</span>
<span class="t" style="left:362.30px;top:490.19px;letter-spacing:0.454px">sched_wakeup</span>
<span class="t" style="left:446.00px;top:490.19px;letter-spacing:0.682px">2467:?:?</span>
<span class="t" style="left:501.10px;top:490.19px">+</span>
<span class="t" style="left:524.30px;top:490.19px;letter-spacing:0.553px">37:120:?</span>
<span class="t" style="left:578.90px;top:490.19px;letter-spacing:0.814px">kworker/3:1</span>
<span class="t" style="left:651.40px;top:490.19px;letter-spacing:0.683px">[003]</span>
<span class="t" style="left:686.70px;top:490.19px;letter-spacing:-0.180px">Success</span>
<span class="t" style="left:7.40px;top:509.19px">6</span>
<span class="t" style="left:57.00px;top:509.19px">3</span>
<span class="t" style="left:92.80px;top:509.19px;letter-spacing:0.741px">14543.110087</span>
<span class="t" style="left:183.30px;top:509.19px;letter-spacing:0.374px">kworker/3:1</span>
<span class="t" style="left:258.40px;top:509.19px;letter-spacing:0.150px">37</span>
<span class="t" style="left:306.90px;top:509.19px;letter-spacing:1.348px">d..4.</span>
<span class="t" style="left:362.30px;top:509.19px;letter-spacing:0.454px">sched_wakeup</span>
<span class="t" style="left:446.00px;top:509.19px;letter-spacing:1.021px">37:?:?</span>
<span class="t" style="left:489.30px;top:509.19px">+</span>
<span class="t" style="left:512.40px;top:509.19px;letter-spacing:0.393px">2467:120:?</span>
<span class="t" style="left:578.90px;top:509.19px;letter-spacing:-0.117px">sshd</span>
<span class="t" style="left:609.40px;top:509.19px;letter-spacing:0.658px">[003]</span>
<span class="t" style="left:644.90px;top:509.19px;letter-spacing:1.026px">Failed</span>
<span class="t" style="left:7.40px;top:528.19px">7</span>
<span class="t" style="left:57.00px;top:528.19px">1</span>
<span class="t" style="left:92.80px;top:528.19px;letter-spacing:0.741px">14543.110088</span>
<span class="t" style="left:183.30px;top:528.19px;letter-spacing:0.787px">trace-cmd</span>
<span class="t" style="left:258.40px;top:528.19px;letter-spacing:0.727px">26858</span>
<span class="t" style="left:306.90px;top:528.19px;letter-spacing:1.348px">d..4.</span>
<span class="t" style="left:362.30px;top:528.19px;letter-spacing:0.454px">sched_wakeup</span>
<span class="t" style="left:446.00px;top:528.19px;letter-spacing:0.520px">26858:?:?</span>
<span class="t" style="left:507.10px;top:528.19px">+</span>
<span class="t" style="left:530.30px;top:528.19px;letter-spacing:0.333px">26858:120:?</span>
<span class="t" style="left:602.20px;top:528.19px;letter-spacing:0.587px">trace-cmd</span>
<span class="t" style="left:663.30px;top:528.19px;letter-spacing:0.683px">[001]</span>
<span class="t" style="left:698.70px;top:528.19px;letter-spacing:1.026px">Failed</span>
<span class="t" style="left:7.40px;top:547.19px">8</span>
<span class="t" style="left:57.00px;top:547.19px">3</span>
<span class="t" style="left:92.80px;top:547.19px;letter-spacing:0.741px">14543.110129</span>
<span class="t" style="left:183.30px;top:547.19px;letter-spacing:-0.183px">sshd</span>
<span class="t" style="left:258.40px;top:547.19px;letter-spacing:0.772px">2467</span>
<span class="t" style="left:306.90px;top:547.19px;letter-spacing:1.348px">d..5.</span>
<span class="t" style="left:362.30px;top:547.19px;letter-spacing:0.454px">sched_wakeup</span>
<span class="t" style="left:446.00px;top:547.19px;letter-spacing:0.682px">2467:?:?</span>
<span class="t" style="left:501.10px;top:547.19px">+</span>
<span class="t" style="left:524.30px;top:547.19px;letter-spacing:0.553px">37:120:?</span>
<span class="t" style="left:578.90px;top:547.19px;letter-spacing:0.814px">kworker/3:1</span>
<span class="t" style="left:651.40px;top:547.19px;letter-spacing:0.683px">[003]</span>
<span class="t" style="left:686.70px;top:547.19px;letter-spacing:-0.180px">Success</span>
<span class="t" style="left:7.40px;top:566.19px">9</span>
<span class="t" style="left:57.00px;top:566.19px">3</span>
<span class="t" style="left:92.80px;top:566.19px;letter-spacing:0.741px">14543.110580</span>
<span class="t" style="left:183.30px;top:566.19px;letter-spacing:1.363px">&lt;idle&gt;</span>
<span class="t" style="left:258.40px;top:566.19px">0</span>
<span class="t" style="left:306.90px;top:566.19px;letter-spacing:1.348px">d..3.</span>
<span class="t" style="left:362.30px;top:566.19px;letter-spacing:0.442px">sched_switch</span>
<span class="t" style="left:446.30px;top:566.19px;letter-spacing:0.711px">0:120:R</span>
<span class="t" style="left:494.60px;top:566.19px;letter-spacing:-0.791px">==&gt;</span>
<span class="t" style="left:518.60px;top:566.19px;letter-spacing:0.215px">26859:120:</span>
<span class="t" style="left:584.70px;top:566.19px;letter-spacing:0.562px">trace-cmd</span>
<span class="t" style="left:7.40px;top:585.19px;letter-spacing:1.330px">10</span>
<span class="t" style="left:57.00px;top:585.19px">0</span>
<span class="t" style="left:92.80px;top:585.19px;letter-spacing:0.741px">14543.110687</span>
<span class="t" style="left:183.30px;top:585.19px;letter-spacing:1.363px">&lt;idle&gt;</span>
<span class="t" style="left:258.40px;top:585.19px">0</span>
<span class="t" style="left:306.90px;top:585.19px;letter-spacing:1.348px">d..3.</span>
<span class="t" style="left:362.30px;top:585.19px;letter-spacing:0.442px">sched_switch</span>
<span class="t" style="left:446.30px;top:585.19px;letter-spacing:0.711px">0:120:R</span>
<span class="t" style="left:494.60px;top:585.19px;letter-spacing:-0.791px">==&gt;</span>
<span class="t" style="left:518.60px;top:585.19px;letter-spacing:0.215px">26860:120:</span>
<span class="t" style="left:584.70px;top:585.19px;letter-spacing:0.562px">trace-cmd</span>
</div>
</body></html>
